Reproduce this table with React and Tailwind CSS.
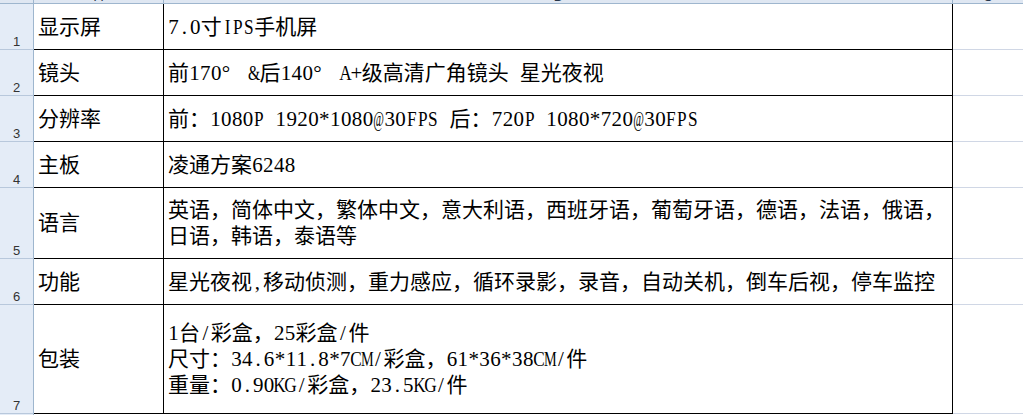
import React from "react";

function glyphClass(ch) {
  if (ch === "@") return "inline-block scale-x-[0.55]";
  if (ch === "M" || ch === "W") return "inline-block scale-x-[0.68]";
  if (ch === "&") return "inline-block scale-x-[0.75]";
  if (/[A-Z]/.test(ch)) return "inline-block scale-x-[0.82]";
  return "inline-block";
}

function Txt({ s }) {
  const out = [];
  let k = 0;
  for (const ch of s) {
    if (ch === "°") {
      out.push(
        <span key={k++} className="inline-block w-[16px]">
          °
        </span>
      );
    } else if (ch.charCodeAt(0) >= 0x20 && ch.charCodeAt(0) <= 0x7e) {
      out.push(
        <span key={k++} className="inline-flex w-[10.9px] justify-center">
          <span className={glyphClass(ch)}>{ch === " " ? "\u00a0" : ch}</span>
        </span>
      );
    } else {
      out.push(<span key={k++}>{ch}</span>);
    }
  }
  return <>{out}</>;
}

const rows = [
  { n: 1, h: "h-[46px]", a: "显示屏", b: ["7.0寸IPS手机屏"] },
  { n: 2, h: "h-[46px]", a: "镜头", b: ["前170° &后140° A+级高清广角镜头 星光夜视"] },
  { n: 3, h: "h-[46px]", a: "分辨率", b: ["前：1080P 1920*1080@30FPS 后：720P 1080*720@30FPS"] },
  { n: 4, h: "h-[46px]", a: "主板", b: ["凌通方案6248"] },
  {
    n: 5,
    h: "h-[71px]",
    a: "语言",
    b: [
      "英语，简体中文，繁体中文，意大利语，西班牙语，葡萄牙语，德语，法语，俄语，",
      "日语，韩语，泰语等",
    ],
  },
  {
    n: 6,
    h: "h-[46px]",
    a: "功能",
    b: ["星光夜视,移动侦测，重力感应，循环录影，录音，自动关机，倒车后视，停车监控"],
  },
  {
    n: 7,
    h: "h-[109px]",
    a: "包装",
    b: [
      "1台/彩盒，25彩盒/件",
      "尺寸：34.6*11.8*7CM/彩盒，61*36*38CM/件",
      "重量：0.90KG/彩盒，23.5KG/件",
    ],
  },
];

export default function App() {
  return (
    <div className="w-[1023px] h-[415px] overflow-hidden bg-white font-['Liberation_Serif','Noto_Sans_CJK_SC',serif] text-[21px] text-black">
      {/* column header strip (mostly scrolled off) */}
      <div className="flex h-[4px] overflow-hidden border-b border-[#9eb6ce] bg-[#dfe7f2]">
        <div className="w-[34px] border-r border-[#9eb6ce]" />
        <div className="w-[130px] border-r border-[#9eb6ce] flex items-end justify-center overflow-hidden">
          <span className="font-['Liberation_Sans',sans-serif] text-[13px] leading-[13px] text-[#27364a]">A</span>
        </div>
        <div className="w-[789px] border-r border-[#9eb6ce] flex items-end justify-center overflow-hidden">
          <span className="font-['Liberation_Sans',sans-serif] text-[13px] leading-[13px] text-[#27364a]">B</span>
        </div>
        <div className="flex-1 flex items-end justify-center overflow-hidden">
          <span className="font-['Liberation_Sans',sans-serif] text-[13px] leading-[13px] text-[#27364a]">C</span>
        </div>
      </div>

      {rows.map((r) => (
        <div key={r.n} className={`flex ${r.h}`}>
          <div className="w-[34px] shrink-0 bg-[#e4ecf7] border-r border-b border-r-[#9eb6ce] border-b-[#b8c8dc] flex items-end justify-center pb-[1px]">
            <span className="font-['Liberation_Sans',sans-serif] text-[13px] leading-[13px] text-[#333333]">
              {r.n}
            </span>
          </div>
          <div className="w-[130px] shrink-0 border-r border-b border-black flex items-center pl-[4px]">
            <span className="leading-[26px] whitespace-nowrap">{r.a}</span>
          </div>
          <div className="w-[789px] shrink-0 border-r border-b border-black flex flex-col justify-center pl-[4px]">
            {r.b.map((line, i) => (
              <div key={i} className="leading-[26px] whitespace-nowrap">
                <Txt s={line} />
              </div>
            ))}
          </div>
          <div className="flex-1 border-b border-[#d0d7e5]" />
        </div>
      ))}

      <div className="flex h-[30px]">
        <div className="w-[34px] shrink-0 bg-[#e4ecf7] border-r border-[#9eb6ce]" />
        <div className="flex-1" />
      </div>
    </div>
  );
}
